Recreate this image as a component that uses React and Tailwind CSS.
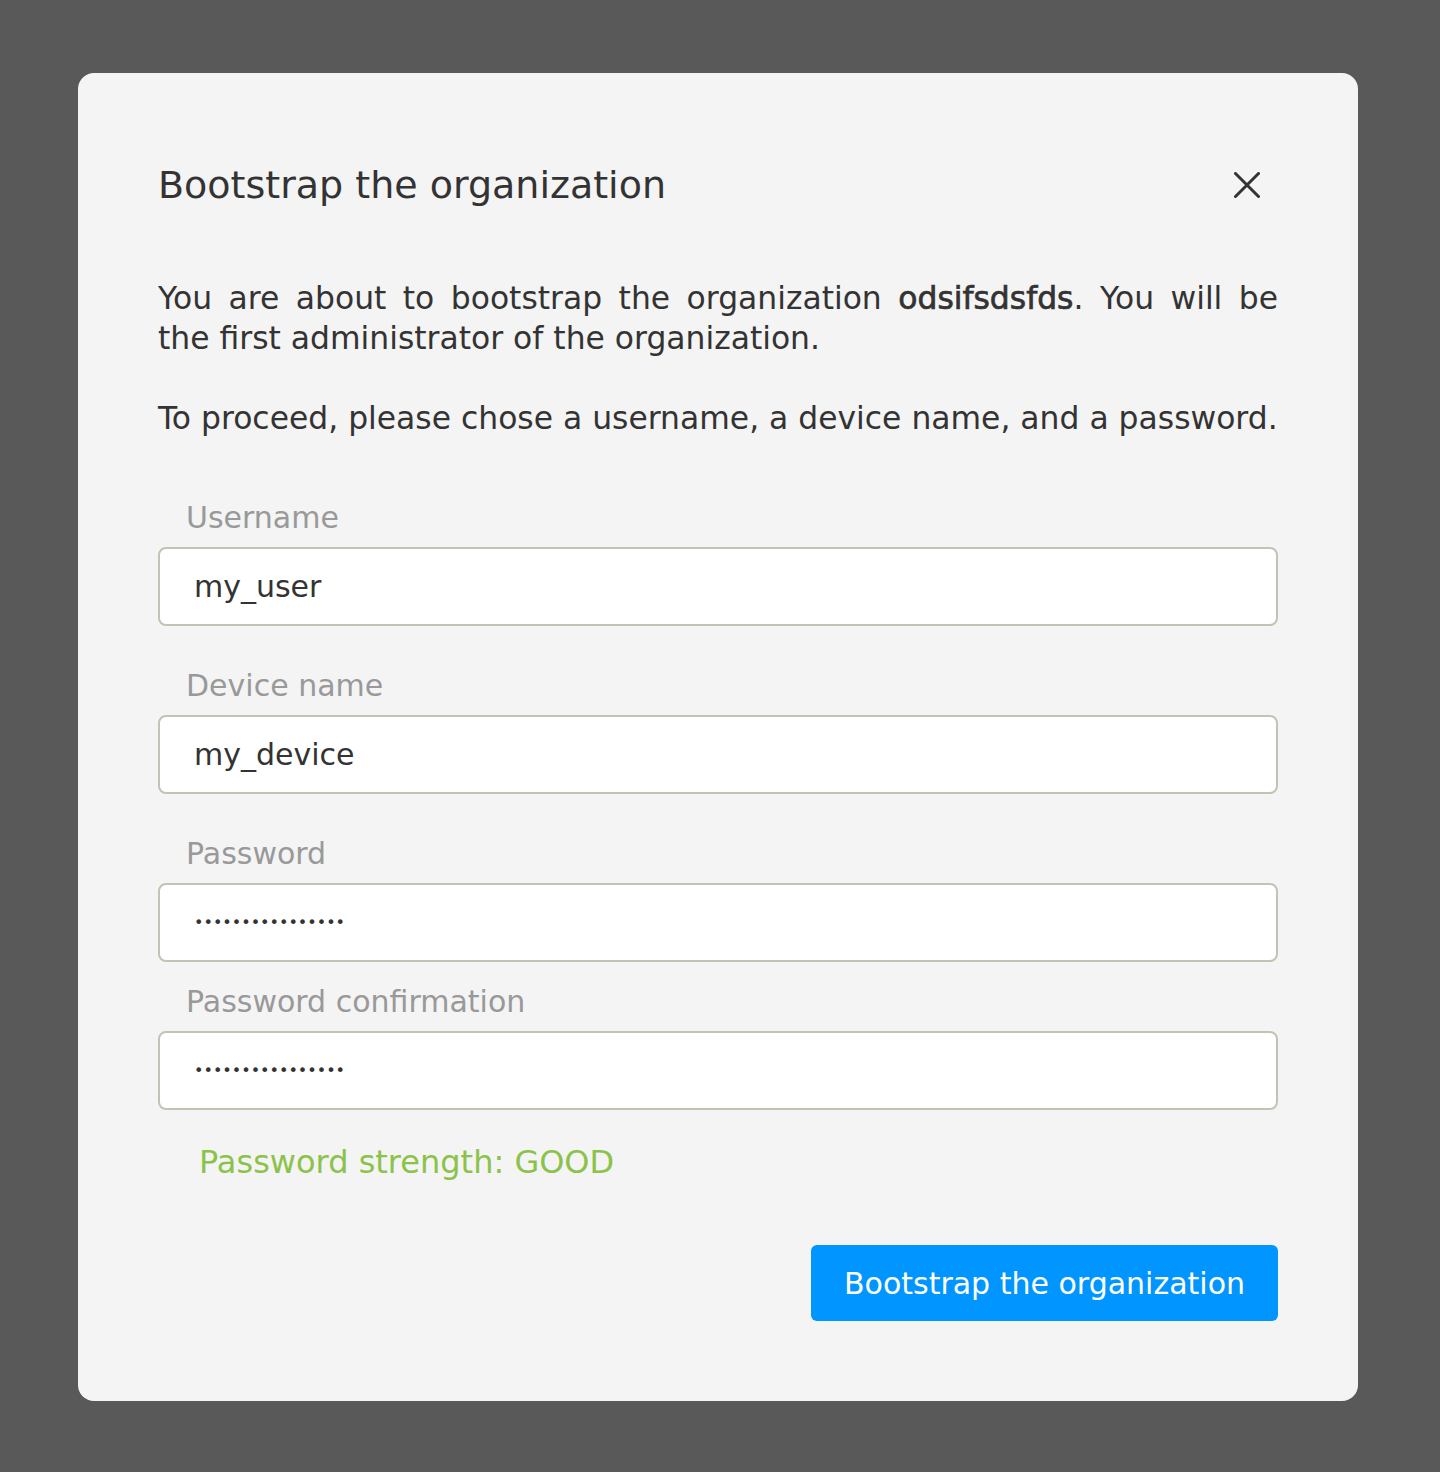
import React from "react";

const sans = "font-['DejaVu_Sans',sans-serif]";

function Field({ label, value, type = "text", className = "" }) {
  return (
    <div className={`flex flex-col ${className}`}>
      <label className={`${sans} pl-[28px] text-[30px] leading-[36px] text-[#999999]`}>{label}</label>
      <input
        type={type}
        defaultValue={value}
        readOnly
        className={`${sans} mt-[11px] h-[79px] w-full rounded-[8px] border-2 border-[#c3c3b4] bg-white px-[34px] ${
          type === "password" ? "text-[16px]" : "text-[30px]"
        } text-[#333333] outline-none`}
      />
    </div>
  );
}

export default function App() {
  return (
    <div className="flex min-h-[1472px] w-full items-start bg-[#595959] pt-[73px] pl-[78px]">
      <div className="flex w-[1280px] flex-col rounded-[16px] bg-[#f4f4f4] px-[80px] pt-[90px] pb-[80px] text-[#333333]">
        <div className="flex items-center justify-between">
          <h2 className={`${sans} text-[38px] leading-[44px] text-[#333333]`}>Bootstrap the organization</h2>
          <button className="mr-[18px] flex h-[26px] w-[26px] items-center justify-center">
            <svg width="26" height="26" viewBox="0 0 26 26" fill="none" stroke="#333333" strokeWidth="3" strokeLinecap="round">
              <path d="M1.5 1.5L24.5 24.5M24.5 1.5L1.5 24.5" />
            </svg>
          </button>
        </div>

        <div className={`${sans} mt-[71px] text-[31.4px] leading-[40px] text-[#333333]`}>
          <p className="text-justify">
            You are about to bootstrap the organization{" "}
            <span className="[-webkit-text-stroke:0.7px_#333333]">odsifsdsfds</span>. You will be the{"\u00a0"}first
            administrator of the organization.
          </p>
          <p className="mt-[40px]">To proceed, please chose a username, a device name, and a password.</p>
        </div>

        <div className="mt-[62px] flex flex-col">
          <Field label="Username" value="my_user" className="mb-[42px]" />
          <Field label="Device name" value="my_device" className="mb-[42px]" />
          <Field label="Password" value="passwordpassword" type="password" className="mb-[22px]" />
          <Field label="Password confirmation" value="passwordpassword" type="password" />
        </div>

        <p className={`${sans} mt-[32px] pl-[41px] text-[32px] leading-[40px] text-[#8bc34a]`}>Password strength: GOOD</p>

        <div className="mt-[63px] flex justify-end">
          <button className={`${sans} h-[76px] rounded-[6px] bg-[#0095ff] px-[33px] text-[30px] text-white`}>
            Bootstrap the organization
          </button>
        </div>
      </div>
    </div>
  );
}
